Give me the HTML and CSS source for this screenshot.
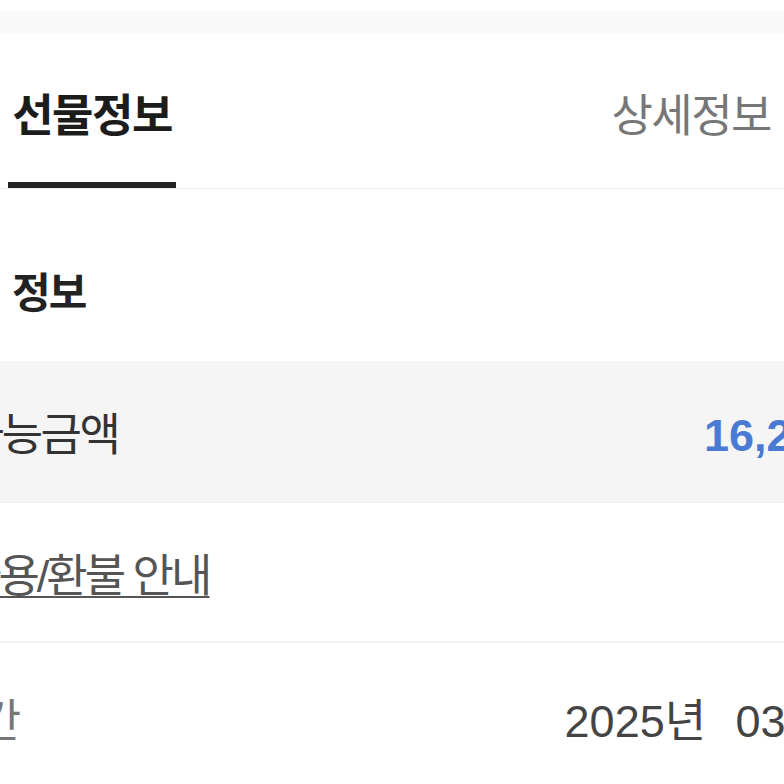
FILE: index.html
```html
<!DOCTYPE html>
<html lang="ko">
<head>
    <meta charset="UTF-8">
    <meta name="viewport" content="width=device-width, initial-scale=1.0">
    <title>선물정보</title>
    <link rel="stylesheet" href="styles.css">
</head>
<body>

    <div class="top-band"></div>

    <nav class="tabs">
        <a href="#" class="tab active">선물정보</a>
        <a href="#" class="tab">상세정보</a>
    </nav>

    <section class="info">
        <h2 class="info-title">정보</h2>

        <div class="row row-amount">
            <span class="label label-amount">사용가능금액</span>
            <span class="value amount">16,200원</span>
        </div>

        <div class="row row-guide">
            <a href="#" class="label label-guide guide-link">사용/환불 안내</a>
        </div>

        <div class="row row-date">
            <span class="label label-date">유효기간</span>
            <span class="value date">2025년 03월 31일</span>
        </div>
    </section>

</body>
</html>
```

FILE: styles.css
```css
body {
    margin: 0;
    font-family: 'Liberation Sans', 'Noto Sans CJK KR', sans-serif;
    background: #fff;
    color: #222;
    overflow: hidden;
}

.top-band {
    height: 23px;
    margin-top: 11px;
    background: #f9f9f9;
}

.tabs {
    display: flex;
    justify-content: space-between;
    height: 155px;
    border-bottom: 1px solid #ececec;
    box-sizing: border-box;
}

.tab {
    display: flex;
    align-items: center;
    justify-content: center;
    padding: 8px 13px 0 0;
    font-size: 45px;
    letter-spacing: -1.5px;
    color: #777;
    text-decoration: none;
    border-bottom: 6px solid transparent;
}

.tab.active {
    width: 168px;
    margin-left: 8px;
    padding: 8px 0 0;
    font-weight: 700;
    color: #1c1c1c;
    border-bottom-color: #222;
}

.info-title {
    margin: 0;
    height: 172px;
    box-sizing: border-box;
    padding: 28px 0 0 12px;
    display: flex;
    align-items: center;
    font-size: 42px;
    letter-spacing: -2px;
    color: #222;
}

.row {
    display: flex;
    align-items: center;
    margin-right: -130px;
    border-bottom: 1px solid #efefef;
}

.label {
    font-size: 45px;
    letter-spacing: -2.5px;
    white-space: nowrap;
}

.value {
    margin-left: auto;
    font-size: 45px;
    color: #444;
    white-space: nowrap;
}

.row-amount {
    height: 141px;
    background: #f5f5f5;
}

.label-amount {
    margin-left: -115px;
    color: #333;
}

.amount {
    margin-right: 31px;
    font-weight: 700;
    color: #4a7bd4;
}

.row-guide {
    height: 138px;
    border-bottom-width: 2px;
    border-bottom-color: #f2f2f2;
}

.label-guide {
    margin-left: -40px;
    letter-spacing: -3px;
}

.guide-link {
    color: #555;
    text-decoration: underline;
    text-decoration-thickness: 2px;
    text-underline-offset: 4px;
}

.row-date {
    height: 148px;
    border-bottom: none;
}

.label-date {
    margin-left: -137px;
    color: #777;
}

.date {
    margin-right: -34px;
    word-spacing: 17px;
}
```
